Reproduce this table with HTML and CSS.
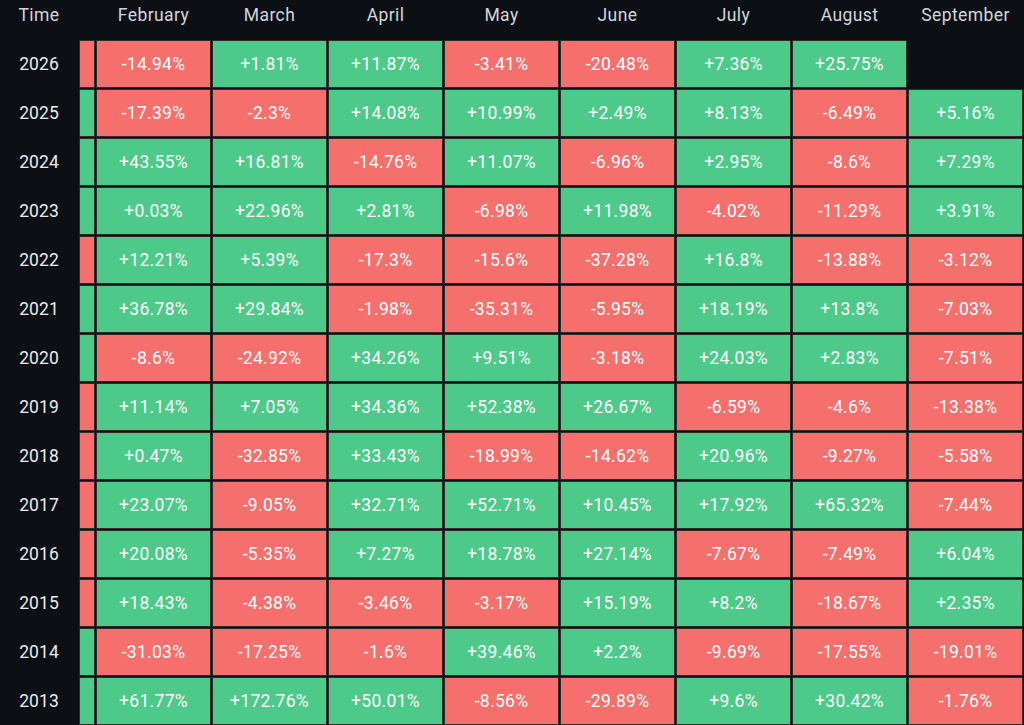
FILE: index.html
```html
<!DOCTYPE html>
<html>
<head>
<meta charset="utf-8">
<link rel="stylesheet" href="styles.css">
</head>
<body>
<div class="table">
  <div class="head">Time</div><div class="head"></div><div class="head">February</div><div class="head">March</div><div class="head">April</div><div class="head">May</div><div class="head">June</div><div class="head">July</div><div class="head">August</div><div class="head">September</div>

  <div class="year">2026</div><div class="cell r"></div><div class="cell r">-14.94%</div><div class="cell g">+1.81%</div><div class="cell g">+11.87%</div><div class="cell r">-3.41%</div><div class="cell r">-20.48%</div><div class="cell g">+7.36%</div><div class="cell g">+25.75%</div><div class="empty"></div>

  <div class="year">2025</div><div class="cell g"></div><div class="cell r">-17.39%</div><div class="cell r">-2.3%</div><div class="cell g">+14.08%</div><div class="cell g">+10.99%</div><div class="cell g">+2.49%</div><div class="cell g">+8.13%</div><div class="cell r">-6.49%</div><div class="cell g">+5.16%</div>

  <div class="year">2024</div><div class="cell g"></div><div class="cell g">+43.55%</div><div class="cell g">+16.81%</div><div class="cell r">-14.76%</div><div class="cell g">+11.07%</div><div class="cell r">-6.96%</div><div class="cell g">+2.95%</div><div class="cell r">-8.6%</div><div class="cell g">+7.29%</div>

  <div class="year">2023</div><div class="cell g"></div><div class="cell g">+0.03%</div><div class="cell g">+22.96%</div><div class="cell g">+2.81%</div><div class="cell r">-6.98%</div><div class="cell g">+11.98%</div><div class="cell r">-4.02%</div><div class="cell r">-11.29%</div><div class="cell g">+3.91%</div>

  <div class="year">2022</div><div class="cell r"></div><div class="cell g">+12.21%</div><div class="cell g">+5.39%</div><div class="cell r">-17.3%</div><div class="cell r">-15.6%</div><div class="cell r">-37.28%</div><div class="cell g">+16.8%</div><div class="cell r">-13.88%</div><div class="cell r">-3.12%</div>

  <div class="year">2021</div><div class="cell g"></div><div class="cell g">+36.78%</div><div class="cell g">+29.84%</div><div class="cell r">-1.98%</div><div class="cell r">-35.31%</div><div class="cell r">-5.95%</div><div class="cell g">+18.19%</div><div class="cell g">+13.8%</div><div class="cell r">-7.03%</div>

  <div class="year">2020</div><div class="cell g"></div><div class="cell r">-8.6%</div><div class="cell r">-24.92%</div><div class="cell g">+34.26%</div><div class="cell g">+9.51%</div><div class="cell r">-3.18%</div><div class="cell g">+24.03%</div><div class="cell g">+2.83%</div><div class="cell r">-7.51%</div>

  <div class="year">2019</div><div class="cell r"></div><div class="cell g">+11.14%</div><div class="cell g">+7.05%</div><div class="cell g">+34.36%</div><div class="cell g">+52.38%</div><div class="cell g">+26.67%</div><div class="cell r">-6.59%</div><div class="cell r">-4.6%</div><div class="cell r">-13.38%</div>

  <div class="year">2018</div><div class="cell r"></div><div class="cell g">+0.47%</div><div class="cell r">-32.85%</div><div class="cell g">+33.43%</div><div class="cell r">-18.99%</div><div class="cell r">-14.62%</div><div class="cell g">+20.96%</div><div class="cell r">-9.27%</div><div class="cell r">-5.58%</div>

  <div class="year">2017</div><div class="cell r"></div><div class="cell g">+23.07%</div><div class="cell r">-9.05%</div><div class="cell g">+32.71%</div><div class="cell g">+52.71%</div><div class="cell g">+10.45%</div><div class="cell g">+17.92%</div><div class="cell g">+65.32%</div><div class="cell r">-7.44%</div>

  <div class="year">2016</div><div class="cell r"></div><div class="cell g">+20.08%</div><div class="cell r">-5.35%</div><div class="cell g">+7.27%</div><div class="cell g">+18.78%</div><div class="cell g">+27.14%</div><div class="cell r">-7.67%</div><div class="cell r">-7.49%</div><div class="cell g">+6.04%</div>

  <div class="year">2015</div><div class="cell r"></div><div class="cell g">+18.43%</div><div class="cell r">-4.38%</div><div class="cell r">-3.46%</div><div class="cell r">-3.17%</div><div class="cell g">+15.19%</div><div class="cell g">+8.2%</div><div class="cell r">-18.67%</div><div class="cell g">+2.35%</div>

  <div class="year">2014</div><div class="cell g"></div><div class="cell r">-31.03%</div><div class="cell r">-17.25%</div><div class="cell r">-1.6%</div><div class="cell g">+39.46%</div><div class="cell g">+2.2%</div><div class="cell r">-9.69%</div><div class="cell r">-17.55%</div><div class="cell r">-19.01%</div>

  <div class="year">2013</div><div class="cell g"></div><div class="cell g">+61.77%</div><div class="cell g">+172.76%</div><div class="cell g">+50.01%</div><div class="cell r">-8.56%</div><div class="cell r">-29.89%</div><div class="cell g">+9.6%</div><div class="cell g">+30.42%</div><div class="cell r">-1.76%</div>
</div>
</body>
</html>
```

FILE: styles.css
```css
html, body {
  margin: 0;
  padding: 0;
  background: #0c0f14;
  overflow: hidden;
}
body {
  width: 1024px;
  height: 725px;
  font-family: Roboto, "Liberation Sans", sans-serif;
}
.table {
  display: grid;
  grid-template-columns: 78px 16px repeat(8, 115px);
  grid-template-rows: 39px repeat(14, 48px);
  column-gap: 1px;
  row-gap: 1px;
}
.head {
  color: #d3d6db;
  font-size: 17.5px;
  font-weight: 400;
  letter-spacing: 0.4px;
  text-align: center;
  padding-top: 5px;
  line-height: 21px;
  white-space: nowrap;
}
.year {
  color: #eaecef;
  font-size: 17.5px;
  font-weight: 400;
  letter-spacing: 0.1px;
  display: flex;
  align-items: center;
  justify-content: center;
}
.cell {
  box-sizing: border-box;
  border: 1px solid #2c2c2c;
  color: #ffffff;
  font-size: 17.5px;
  font-weight: 450;
  letter-spacing: 0.3px;
  display: flex;
  align-items: center;
  justify-content: center;
  white-space: nowrap;
}
.r { background: #f5706d; }
.g { background: #4dca89; }
```
